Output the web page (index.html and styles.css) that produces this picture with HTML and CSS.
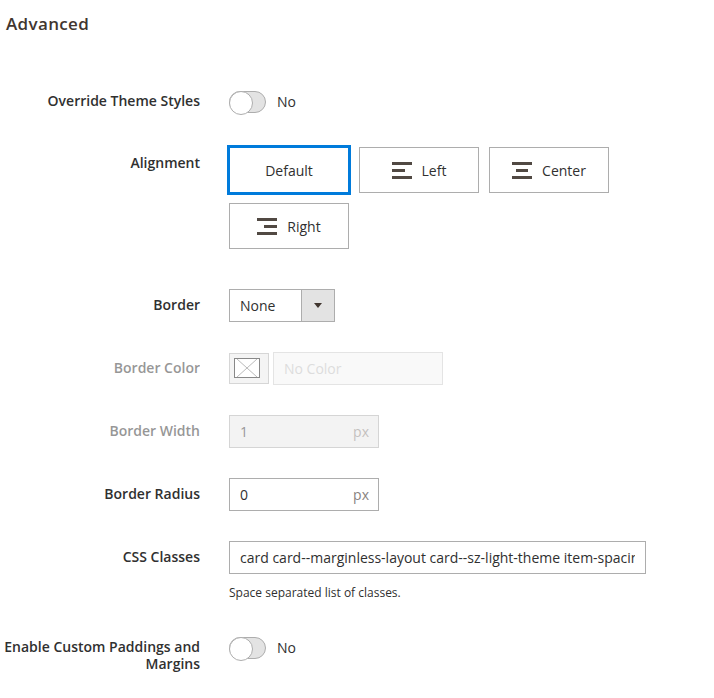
FILE: index.html
```
<!DOCTYPE html>
<html lang="en">
<head>
<meta charset="utf-8">
<title>Advanced</title>
<link rel="stylesheet" href="styles.css">
</head>
<body>
<form class="panel">
  <h2 class="title">Advanced</h2>
  <div class="field field-override">
    <label class="label">Override Theme Styles</label>
    <div class="control toggle"><span class="switch"></span><span>No</span></div>
  </div>
  <div class="field field-alignment">
    <label class="label">Alignment</label>
    <div class="control options">
      <div class="option selected">Default</div>
      <div class="option"><svg width="20" height="17" viewBox="0 0 20 17"><path d="M0 0h20v3H0zM0 7h13v3H0zM0 14h20v3H0z"/></svg>Left</div>
      <div class="option"><svg width="20" height="17" viewBox="0 0 20 17"><path d="M0 0h20v3H0zM4 7h12v3H4zM0 14h20v3H0z"/></svg>Center</div>
      <div class="option"><svg width="20" height="17" viewBox="0 0 20 17"><path d="M0 0h20v3H0zM7 7h13v3H7zM0 14h20v3H0z"/></svg>Right</div>
    </div>
  </div>
  <div class="field field-border">
    <label class="label">Border</label>
    <div class="control select"><span class="select-value">None</span><span class="select-arrow"></span></div>
  </div>
  <div class="field field-color disabled">
    <label class="label">Border Color</label>
    <div class="control color">
      <div class="swatch"><svg width="26" height="20" viewBox="0 0 26 20"><rect class="swatch-box" x=".5" y=".5" width="25" height="19"/><path class="swatch-cross" d="M3 1l20 18M23 1L3 19"/></svg></div>
      <div class="color-input">No Color</div>
    </div>
  </div>
  <div class="field field-width disabled">
    <label class="label">Border Width</label>
    <div class="control number"><span>1</span><span class="unit">px</span></div>
  </div>
  <div class="field field-radius">
    <label class="label">Border Radius</label>
    <div class="control number"><span>0</span><span class="unit">px</span></div>
  </div>
  <div class="field field-classes">
    <label class="label">CSS Classes</label>
    <div class="control">
      <div class="text-input"><div class="clip">card card--marginless-layout card--sz-light-theme item-spacing</div></div>
      <div class="note">Space separated list of classes.</div>
    </div>
  </div>
  <div class="field field-custom">
    <label class="label">Enable Custom Paddings and Margins</label>
    <div class="control toggle"><span class="switch"></span><span>No</span></div>
  </div>
</form>
</body>
</html>
```
FILE: styles.css
```
* { box-sizing: border-box; }
body { margin: 0; background: #fff; color: #303030; font: 14px/19px "Open Sans", sans-serif; }
.panel { width: 714px; height: 698px; padding-top: 13px; overflow: hidden; }
.title { margin: 0 0 0 6px; height: 22px; font-size: 17px; line-height: 22px; font-weight: 600; letter-spacing: .35px; color: #41362f; }
.field { display: flex; align-items: flex-start; }
.label { width: 200px; margin-right: 29px; padding-top: 7px; text-align: right; font-weight: 600; line-height: 17px; flex: none; }
.disabled .label { opacity: .5; }
.field-override { height: 62px; margin-top: 50px; }
.field-alignment { height: 142px; }
.field-border, .field-color, .field-width, .field-radius { height: 63px; }
.toggle { display: flex; align-items: center; gap: 11px; height: 33px; }
.switch { width: 37px; height: 22px; border: 1px solid #adadad; border-radius: 11px; background: #e3e3e3; }
.switch::before { content: ""; display: block; width: 22px; height: 22px; margin: -1px; border: 1px solid #adadad; border-radius: 50%; background: #fff; }
.options { display: flex; flex-wrap: wrap; gap: 10px; width: 390px; }
.option { display: flex; align-items: center; justify-content: center; gap: 10px; width: 120px; height: 46px; border: 1px solid #adadad; }
.option svg { fill: #514943; }
.selected { border-color: #007bdb; box-shadow: 0 0 0 2px #007bdb; }
.select { display: flex; width: 106px; height: 33px; border: 1px solid #adadad; }
.select-value { flex: 1; padding: 6px 10px; }
.select-arrow { display: flex; align-items: center; justify-content: center; width: 33px; background: #e3e3e3; border-left: 1px solid #adadad; }
.select-arrow::before { content: ""; border: 4px solid transparent; border-top: 5px solid #41362f; border-bottom: 0; }
.color { display: flex; gap: 4px; }
.swatch { width: 40px; height: 31px; margin-top: 1px; padding: 4px; border: 1px solid #d6d6d6; background: #f4f4f4; }
.swatch svg { display: block; }
.color-input { width: 170px; height: 33px; padding: 6px 10px; border: 1px solid #e4e4e4; background: #f9f9f9; color: #ddd; }
.number { display: flex; justify-content: space-between; width: 150px; height: 33px; padding: 6px 9px 6px 10px; border: 1px solid #adadad; }
.unit { color: #8a837f; }
.disabled .number { background: #e9e9e9; opacity: .5; }
.text-input { width: 417px; height: 33px; padding: 6px 10px; border: 1px solid #adadad; }
.clip { overflow: hidden; white-space: nowrap; }
.note { margin-top: 10px; font-size: 12px; line-height: 17px; }
.field-classes { height: 90px; }
.swatch-box { fill: #fff; stroke: #888; }
.swatch-cross { fill: none; stroke: #bbb; }
```
